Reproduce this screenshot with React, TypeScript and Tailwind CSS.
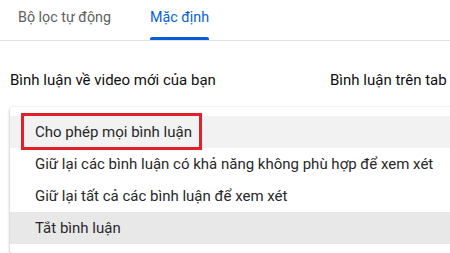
export default function App() {
  const items = [
    { label: 'Cho phép mọi bình luận', bg: 'bg-[#f2f2f2]' },
    { label: 'Giữ lại các bình luận có khả năng không phù hợp để xem xét', bg: 'bg-white' },
    { label: 'Giữ lại tất cả các bình luận để xem xét', bg: 'bg-white' },
    { label: 'Tắt bình luận', bg: 'bg-[#e8e8e8]' },
  ]

  return (
    <div className="relative w-[450px] h-[253px] overflow-hidden bg-white font-['Roboto',sans-serif]">
      {/* Tabs */}
      <div className="flex h-[41px] border-b border-[#e0e0e0] pl-[18px] gap-[39px]">
        <div className="flex flex-col items-center">
          <span className="mt-[7px] text-[14.3px] leading-[20px] text-[#606060]">Bộ lọc tự động</span>
        </div>
        <div className="flex flex-col">
          <span className="mt-[7px] text-[14.3px] leading-[20px] text-[#065fd4]">Mặc định</span>
          <div className="mt-auto h-[3px] rounded-t-[2px] bg-[#065fd4]" />
        </div>
      </div>

      {/* Headings */}
      <div className="flex mt-[29px] pl-[10px] whitespace-nowrap">
        <span className="w-[320px] text-[15px] leading-[20px] text-[#0f0f0f]">Bình luận về video mới của bạn</span>
        <span className="text-[15px] leading-[20px] text-[#0f0f0f]">Bình luận trên tab</span>
      </div>

      {/* Menu */}
      <div className="absolute left-[10px] top-[107px] w-[480px] py-[9px] bg-white rounded-[3px] shadow-[0_1px_3px_rgba(0,0,0,0.35)]">
        {items.map(item => (
          <div key={item.label} className={`h-[32px] flex items-center pl-[25px] ${item.bg}`}>
            <span className="text-[15px] text-[#282828] whitespace-nowrap">{item.label}</span>
          </div>
        ))}
      </div>

      {/* Red annotation box */}
      <div className="absolute left-[21px] top-[113px] w-[181px] h-[37px] border-[3px] border-[#e3202a]" />
    </div>
  )
}
